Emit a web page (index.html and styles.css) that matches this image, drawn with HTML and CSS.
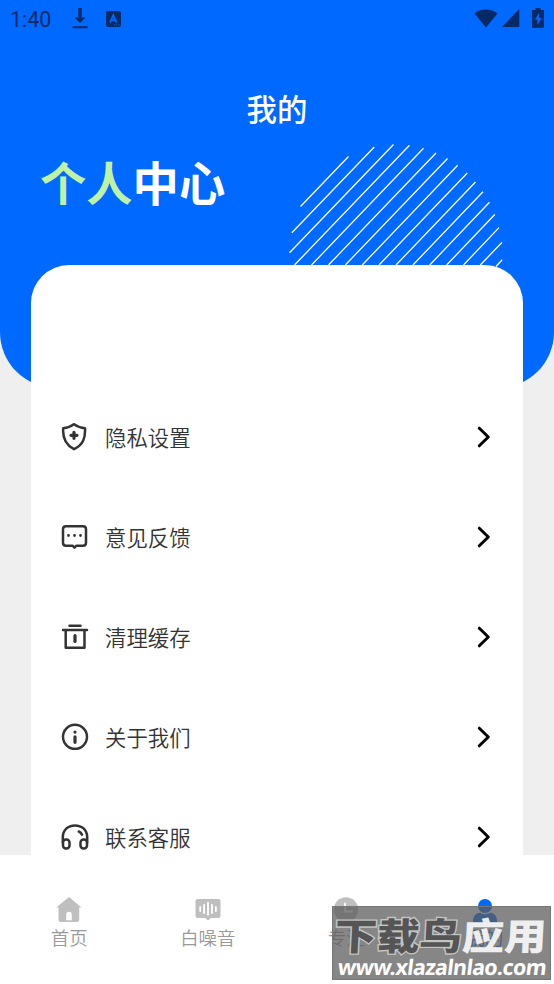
FILE: index.html
```
<!DOCTYPE html>
<html lang="zh-CN">
<head>
  <meta charset="utf-8">
  <meta name="viewport" content="width=device-width, initial-scale=1">
  <title>我的</title>
  <link rel="stylesheet" href="styles.css">
</head>
<body>
<div class="app">

  <div class="hero">
    <div class="status">
      <span class="time">1:40</span>
      <svg class="download" width="16" height="21" viewBox="0 0 16 21"><path d="M6.300 0h3.400v9.500h3.900L8 15 2.400 9.500h3.900zM.500 18.200h15v2H.5z"/></svg>
      <svg class="lang" width="15" height="16" viewBox="0 0 15 16"><rect width="15" height="16" rx="2"/><path class="cut" d="M4 11.500 7.300 4.200 10.600 11.500M5.200 9.200h4.200"/><path class="dots" d="M8 14h1M10.300 14h1M12.600 14h1"/></svg>
      <div class="signals">
        <svg width="24" height="19" viewBox="0 0 24 19"><path d="M.500 4.500C6-1 18-1 23.500 4.500L12 18.500z"/></svg>
        <svg class="cell" width="18" height="18" viewBox="0 0 18 18"><path d="M17.300 0v18H0z"/></svg>
        <svg width="12" height="20" viewBox="0 0 12 20"><path d="M3.500 0h5v2H12v16.500q0 1.500-1.500 1.500h-9Q0 20 0 18.500V2h3.500z"/><path class="bolt" d="M7 5 3 11.500h2.500V17l4-7H7z"/></svg>
      </div>
    </div>
    <h1>我的</h1>
    <h2><span>个人</span>中心</h2>
    <svg class="stripes" width="220" height="124" viewBox="285 143 220 124">
      <path d="M300.500 206.500 348.500 156.500M291.800 232.700 374.300 147M289.500 252.700 393.500 144.500M294.500 265 409.500 145.300M311.500 265 423.500 148.300M328.500 265 436 153M345.300 265 447.500 158.500M362.200 265 457.700 165.300M379 265 467.300 173M396 265 475.500 182M412.900 265 483 191.700M429.700 265 489.500 202.300M446.600 265 494.800 214.500M463.500 265 499 227.600M480.300 265 501.900 242.500M496 266.500 502.200 259.700"/>
    </svg>
  </div>

  <div class="card">
    <div class="item">
      <svg class="icon" viewBox="0 0 28 28"><path d="M13 1.200C16.500 3.800 20 4.800 24 5.200C24.500 14.500 22.500 21.500 13 26.200C4 21.500 1.500 14.500 2.200 5.200C6 4.800 9.500 3.800 13 1.200z"/><path class="thick" d="M13 9.300v6M10 12.300h6"/></svg>
      <span>隐私设置</span>
      <svg class="arrow" viewBox="0 0 14 22"><path d="M2.300 2.200 11.300 11 2.300 19.800"/></svg>
    </div>
    <div class="item">
      <svg class="icon" viewBox="0 0 28 28"><path d="M5 3.200h17q3 0 3 3v13.500q0 3-3 3h-6.500L13.500 24.700 11.500 22.700H5q-3 0-3-3V6.200q0-3 3-3z"/><path class="dots" d="M7.500 12.500h.01M13.500 12.500h.01M19.500 12.500h.01"/></svg>
      <span>意见反馈</span>
      <svg class="arrow" viewBox="0 0 14 22"><path d="M2.300 2.200 11.300 11 2.300 19.800"/></svg>
    </div>
    <div class="item">
      <svg class="icon" viewBox="0 0 28 28"><path d="M8.500 2.800h11M2 7h24M4.700 7v17.800h18.800V7"/><path class="thick" d="M14 12.500v6"/></svg>
      <span>清理缓存</span>
      <svg class="arrow" viewBox="0 0 14 22"><path d="M2.300 2.200 11.300 11 2.300 19.800"/></svg>
    </div>
    <div class="item">
      <svg class="icon" viewBox="0 0 28 28"><circle cx="14" cy="13.800" r="12"/><path class="thick" d="M14 13.800v5.500M14 9.100h.01"/></svg>
      <span>关于我们</span>
      <svg class="arrow" viewBox="0 0 14 22"><path d="M2.300 2.200 11.300 11 2.300 19.800"/></svg>
    </div>
    <div class="item">
      <svg class="icon" viewBox="0 0 28 28"><path d="M1.800 19.500V14.500C1.800 7 7 2.500 14 2.500s12.200 4.500 12.200 12v5"/><rect x="2" y="16.500" width="6.500" height="9" rx="3"/><rect x="19.500" y="16.500" width="6.500" height="9" rx="3"/><path d="M17.800 8.500q2.300 1 3.200 3.200"/></svg>
      <span>联系客服</span>
      <svg class="arrow" viewBox="0 0 14 22"><path d="M2.300 2.200 11.300 11 2.300 19.800"/></svg>
    </div>
  </div>

  <div class="tabbar">
    <div class="tab">
      <svg viewBox="0 0 26 26"><path d="M13 0 25.500 10.500H23.200V23q0 2-2 2H4.500q-2 0-2-2V10.500H.3z"/><path class="cut" d="M10.200 23.300v-5.500q0-3 2.800-3t2.800 3v5.500z"/></svg>
      <span>首页</span>
    </div>
    <div class="tab">
      <svg viewBox="0 0 26 26"><path d="M3 2h20q2.500 0 2.500 2.500v14q0 2.500-2.500 2.500h-7l-3 2.500-3-2.500H3Q.500 21 .500 18.500v-14Q.500 2 3 2z"/><path class="wave" d="M5.200 10v4M9.100 8v8M13 5.700v12M17 8v8M20.900 10v4"/></svg>
      <span>白噪音</span>
    </div>
    <div class="tab">
      <svg viewBox="0 0 26 26"><circle cx="13" cy="12.500" r="12.200"/><path class="wave" d="M12 6.500v8h7"/></svg>
      <span>专注</span>
    </div>
    <div class="tab active">
      <svg viewBox="0 0 26 26"><circle cx="13" cy="9" r="7"/><path d="M.800 26q0-10 7.200-10.300 5 3 10 0Q25.200 16 25.200 26z"/></svg>
      <span>我的</span>
    </div>
  </div>

  <div class="watermark">
    <div class="brand"><span>下载鸟</span>应用</div>
    <div class="url">www.xlazalnlao.com</div>
  </div>

</div>
</body>
</html>
```
FILE: styles.css
```
* {
  box-sizing: border-box;
}

body {
  margin: 0;
  font-family: "Noto Sans CJK SC", sans-serif;
  background: #efefef;
}

.app {
  position: relative;
  display: flex;
  flex-direction: column;
  height: 984px;
  overflow: hidden;
}

.hero {
  position: relative;
  flex: none;
  height: 388px;
  background: #0069ff;
  border-radius: 0 0 56px 56px;
}

.status {
  display: flex;
  align-items: center;
  height: 38px;
  padding: 0 10px;
  color: #062a66;
  font: 400 21.5px/38px Roboto, sans-serif;
}

.status svg {
  fill: #062a66;
}

.time {
  width: 62px;
  padding-top: 2px;
}

.download {
  margin-top: -1px;
}

.lang {
  margin-left: 18px;
}

.lang .cut {
  fill: none;
  stroke: #0069ff;
  stroke-width: 1.8;
}

.dots {
  stroke: #0069ff;
}

.signals {
  display: flex;
  align-items: center;
  margin-left: auto;
  margin-top: -2px;
  gap: 4px;
}

.signals .cell {
  margin-right: 8px;
}

.signals .bolt {
  fill: #0069ff;
}

h1 {
  margin: 48px 0 0;
  color: #fff;
  font-size: 30.4px;
  font-weight: 500;
  line-height: 44px;
  text-align: center;
}

h2 {
  margin: 16px 0 0 40px;
  color: #fff;
  font-size: 46.3px;
  font-weight: 700;
  line-height: 70px;
}

h2 span {
  color: #bff2a5;
}

/* decoration behind the card */
.stripes {
  position: absolute;
  left: 285px;
  top: 143px;
  fill: none;
  stroke: #fff;
  stroke-width: 1.3;
}

.card {
  position: relative;
  flex: none;
  height: 591px;
  margin: -123.500px 31px 0;
  padding: 122.500px 30px 0;
  background: #fff;
  border-radius: 38px 38px 0 0;
  overflow: hidden;
}

.item {
  display: flex;
  align-items: center;
  height: 100px;
  color: #333;
  font-size: 21.4px;
  font-weight: 350;
}

.item span {
  margin: -1px 0 0 16px;
}

.icon {
  width: 28px;
  height: 28px;
  fill: none;
  stroke: #333;
  stroke-width: 2.500;
  stroke-linejoin: round;
  stroke-linecap: round;
}

.icon .thick {
  stroke-width: 3.200;
}

.icon .dots {
  stroke: #333;
  stroke-width: 2.800;
}

.arrow {
  width: 14px;
  height: 22px;
  margin-left: auto;
  margin-right: 2px;
  fill: none;
  stroke: #000;
  stroke-width: 3;
  stroke-linecap: round;
  stroke-linejoin: round;
}

.tabbar {
  position: relative;
  flex: none;
  display: flex;
  height: 129px;
  margin-top: -.500px;
  background: #fff;
}

.tab {
  flex: 1;
  display: flex;
  flex-direction: column;
  align-items: center;
  padding-top: 42px;
  color: #999;
  font-size: 18.4px;
  font-weight: 350;
  line-height: 28px;
}

.tab svg {
  width: 26px;
  height: 26px;
  fill: #bfbfbf;
}

.tab .cut {
  fill: #fff;
}

.tab .wave {
  fill: none;
  stroke: #fff;
  stroke-width: 1.800;
  stroke-linecap: round;
}

.tab.active {
  color: #0069ff;
}

.tab.active svg {
  fill: #0069ff;
}

.watermark {
  position: absolute;
  left: 332px;
  top: 906px;
  width: 219px;
  height: 74px;
  background: rgba(92, 92, 92, .74);
  border: 1px solid #777;
  color: rgba(255, 255, 255, .88);
  white-space: nowrap;
}

.brand {
  height: 48px;
  padding-left: 2px;
  font-size: 42.4px;
  font-weight: 800;
  line-height: 56px;
  transform: skewX(-3deg) scaleY(.88);
}

.brand span {
  color: #555;
  -webkit-text-stroke: 3px #c4c4c4;
  paint-order: stroke fill;
}

.url {
  padding-left: 5px;
  color: #fff;
  font: 700 21.400px/23px "Noto Sans", sans-serif;
  letter-spacing: -.600px;
  transform: skewX(-7deg);
}
```
